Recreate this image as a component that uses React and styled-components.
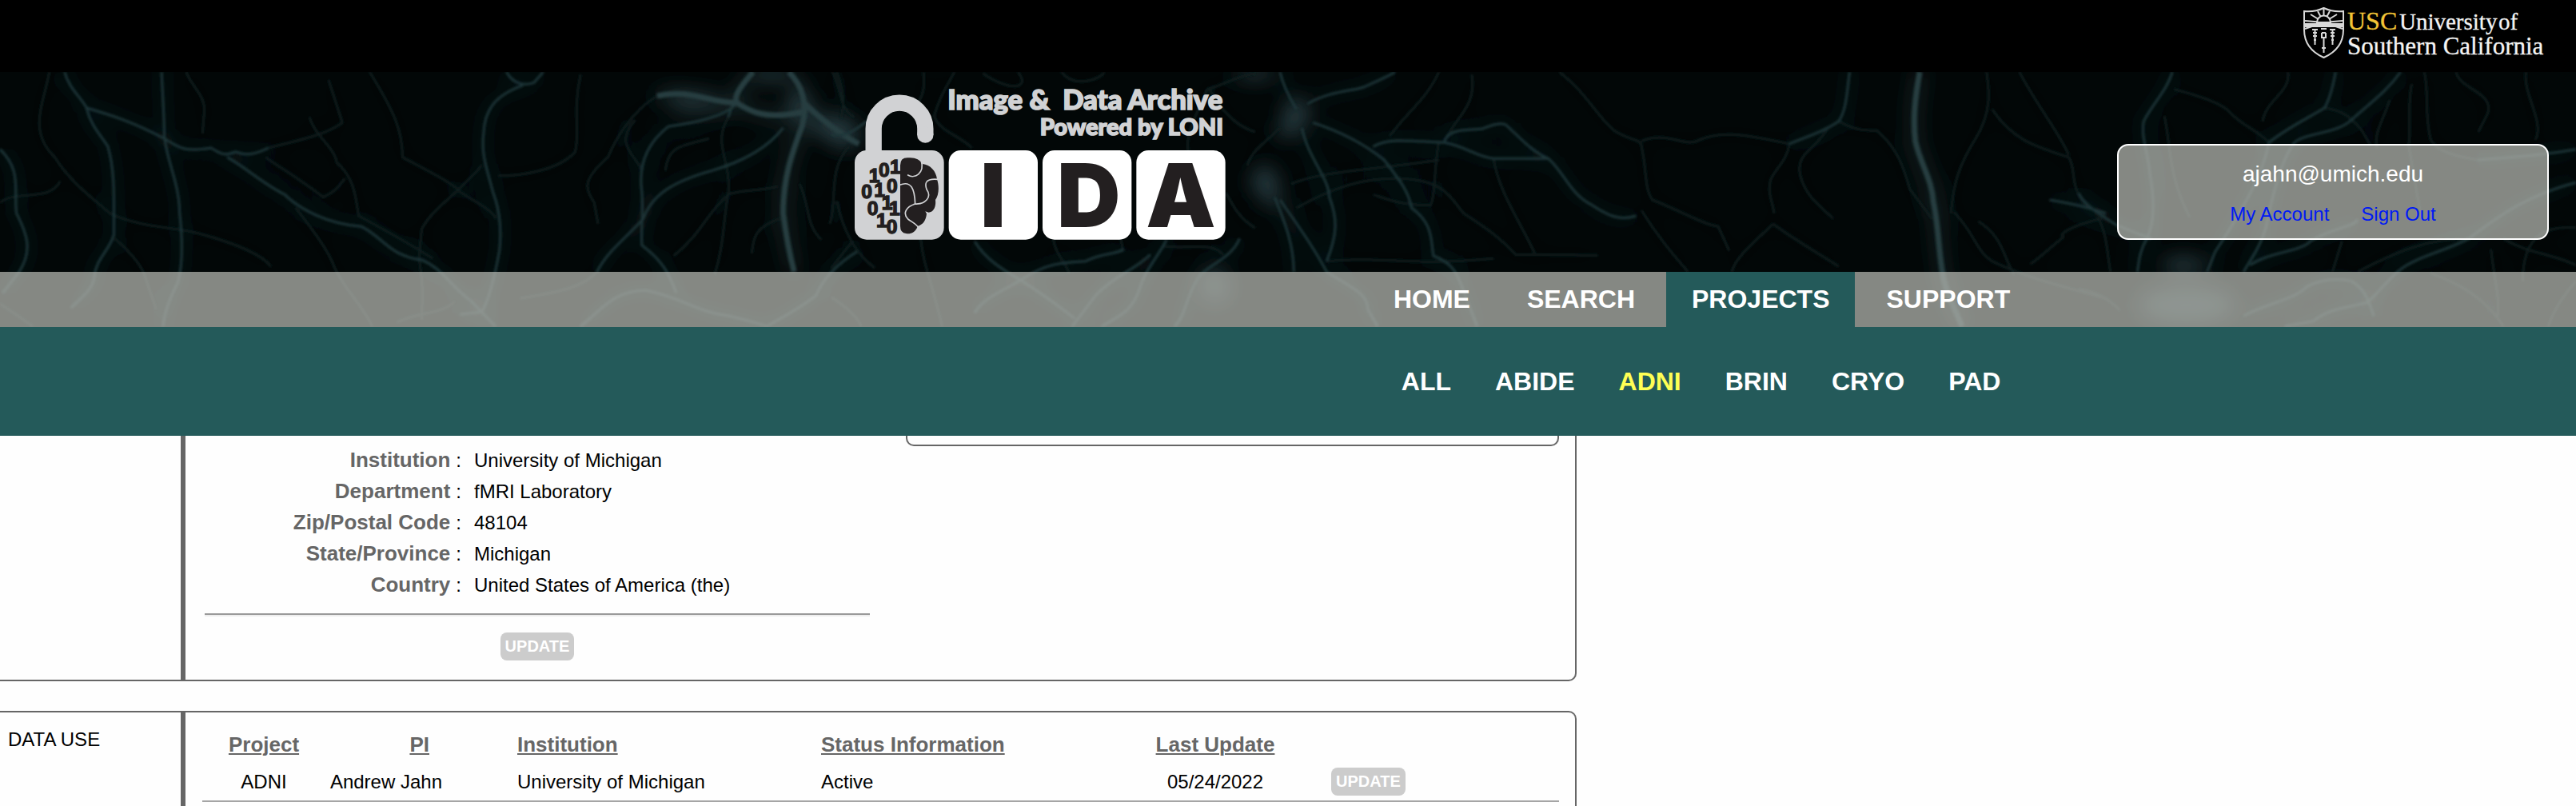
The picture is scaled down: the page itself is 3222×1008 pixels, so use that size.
import React from "react";
import styled, { createGlobalStyle } from "styled-components";

const sans = '"Liberation Sans", Arial, Helvetica, sans-serif';
const line = "#666";

const GlobalStyle = createGlobalStyle`
  *, *::before, *::after { box-sizing: border-box; }
  body {
    margin: 0;
    background: #fefefe;
    color: #000;
    font-family: ${sans};
    font-size: 24px;
    line-height: 39px;
  }
  a { color: inherit; text-decoration: none; }
`;

const Page = styled.div`
  min-height: 100vh;
  display: flex;
  flex-direction: column;
  overflow: hidden;
`;

const TopBar = styled.div`
  height: 90px;
  padding: 4px 40px 0 0;
  display: flex;
  justify-content: flex-end;
  background: #000;
`;

const Masthead = styled.header`
  position: relative;
  isolation: isolate;
  background: #020707;
`;

const Backdrop = styled.svg`
  position: absolute;
  inset: 0;
  width: 100%;
  height: 100%;
  z-index: -1;
`;

const Banner = styled.div`
  height: 250px;
  padding: 0 34px 40px 33.15%;
  display: flex;
  align-items: flex-end;
  justify-content: space-between;
`;

const LogoMark = styled.svg`
  width: 466px;
  height: 192px;
  overflow: visible;
`;

const AccountBox = styled.section`
  width: 540px;
  height: 120px;
  padding: 16px 0;
  border: 2px solid #fff;
  border-radius: 14px;
  background: rgba(178, 180, 174, 0.75);
  text-align: center;
`;

const Email = styled.div`
  color: #fff;
  font-size: 28px;
  line-height: 40px;
`;

const AccountLinks = styled.div`
  display: flex;
  justify-content: center;
  gap: 40px;
  padding-top: 10px;
  line-height: 40px;
  color: #0019f5;
`;

const MainNav = styled.nav`
  display: flex;
  gap: 7px;
  padding-left: 53.1%;
  background: rgba(178, 180, 174, 0.75);
`;

const NavLink = styled.a`
  padding: 0 32px;
  font-size: 32px;
  font-weight: bold;
  line-height: 68px;
  height: 69px;
  color: #fff;
  background: ${(p) => (p.$active ? "#245a5a" : "transparent")};
`;

const SubNav = styled.nav`
  display: flex;
  gap: 55px;
  height: 136px;
  padding-left: 54.4%;
  background: #245a5a;
`;

const SubLink = styled.a`
  font-size: 32px;
  font-weight: bold;
  line-height: 136px;
  color: ${(p) => (p.$active ? "#ffff54" : "#fff")};
`;

const Main = styled.main`
  flex: 1;
  display: flex;
  flex-direction: column;
  gap: 37px;
  max-width: 1972px;
`;

const Panel = styled.section`
  display: grid;
  grid-template-columns: 226px 1fr;
  flex-grow: ${(p) => (p.$grow ? 1 : 0)};
  border: 2px solid ${line};
  border-left: 0;
  border-top-width: ${(p) => (p.$continues ? 0 : 2)}px;
  border-bottom-width: ${(p) => (p.$grow ? 0 : 2)}px;
  border-radius: ${(p) => (p.$continues ? "0 0 10px 0" : "0 10px 0 0")};
`;

const PanelTitle = styled.h2`
  margin: 0;
  padding: 14px 10px;
  font-size: 24px;
  font-weight: normal;
`;

const PanelBody = styled.div`
  display: flex;
  align-items: flex-start;
  border-left: 6px solid ${line};
  padding: 0 20px 0 ${(p) => p.$indent}px;
`;

const Profile = styled.div`
  flex: 833 1 0;
  margin-right: 45px;
  padding: 11px 0 24px;
  text-align: center;
`;

const Fields = styled.dl`
  margin: 0;
`;

const Field = styled.div`
  display: flex;
  align-items: baseline;
  height: 39px;
`;

const FieldName = styled.dt`
  width: 321px;
  text-align: right;
  font-size: 26px;
  font-weight: bold;
  color: ${line};

  &::after {
    content: ":";
    margin-left: 7px;
    font-size: 24px;
    font-weight: normal;
    color: #000;
  }
`;

const FieldValue = styled.dd`
  margin: 0;
  padding-left: 16px;
`;

const Rule = styled.hr`
  margin: 16px 0 20px;
  border: 0;
  border-top: 2px solid #999;
  border-bottom: 2px solid #eee;
`;

const UpdateButton = styled.button`
  display: block;
  height: 35px;
  margin: ${(p) => (p.$centered ? "0 auto" : "0")};
  padding: 0 6px;
  border: 0;
  border-radius: 8px;
  background: #ccc;
  color: #fff;
  font: bold 20px ${sans};
`;

const SideBox = styled.div`
  flex: 814 1 0;
  height: 13px;
  border: 2px solid ${line};
  border-top: 0;
  border-radius: 0 0 10px 10px;
`;

const UseTable = styled.table`
  width: 100%;
  margin-top: 18px;
  table-layout: fixed;
  border-collapse: separate;
  border-spacing: 0;
`;

const Col = styled.col`
  width: ${(p) => p.$width};
`;

const Th = styled.th`
  height: 45px;
  padding: 0 ${(p) => p.$end || 0}px 0 0;
  text-align: ${(p) => p.$align || "left"};
  font-size: 26px;
  color: ${line};
  text-decoration: underline;
  text-decoration-thickness: 2px;
  text-underline-offset: 2px;
`;

const Td = styled.td`
  height: 49px;
  padding: 0 ${(p) => p.$end || 0}px 0 ${(p) => p.$start || 0}px;
  text-align: ${(p) => p.$align || "left"};
  border-bottom: 2px solid #a5a5a5;
`;

/* Each sheet is traced on its own grid, then mapped onto the banner. */
const neurons = [
  {
    map: "matrix(0.685 0 0 0.3333 0 -10)",
    somas: [[1408, 40, 36, 26], [1460, 160, 20, 70], [1270, 140, 50, 30], [1540, 270, 30, 40]],
    bright: [
      "M118,30C125,90 150,130 158,165C165,230 185,270 197,310C210,400 208,500 208,640C200,700 175,730 172,800C170,850 140,890 130,915",
      "M158,165C200,190 240,215 300,280C330,320 340,330 385,315C400,330 405,350 430,330C450,345 465,340 490,315",
      "M415,350C450,390 480,450 520,490C550,550 600,600 660,610C700,650 710,720 770,735C810,770 820,830 860,890L905,985",
      "M955,80C900,120 885,180 883,260C878,340 890,400 900,480C915,560 915,640 912,700C905,780 895,880 880,930L840,940",
      "M925,30C935,70 955,85 975,70L992,30",
      "M295,30C297,120 300,200 300,270C305,370 328,450 328,560C333,650 335,740 325,820C310,880 300,930 298,985",
      "M0,320C40,400 25,470 30,560C50,640 60,700 35,780L5,860",
      "M1375,30C1350,90 1340,130 1330,200",
      "M1430,240C1400,320 1350,370 1300,400C1230,440 1190,490 1175,580C1140,660 1110,700 1090,780",
      "M1345,150C1320,200 1270,220 1220,235C1180,300 1165,380 1172,480C1175,560 1170,620 1172,680C1210,740 1220,780 1235,860",
      "M1060,985C1100,920 1120,850 1180,850C1250,880 1270,930 1330,945C1370,965 1390,975 1400,985",
      "M1568,700C1520,760 1500,820 1490,870C1450,930 1420,960 1400,985",
    ],
    thick: [
      "M1440,30C1465,80 1475,150 1465,230C1445,340 1430,430 1430,560C1435,640 1440,700 1450,780",
      "M1470,150C1500,210 1540,270 1568,300",
      "M1200,120C1260,90 1300,150 1345,145C1370,180 1400,210 1465,180",
      "M1375,30C1350,90 1340,120 1345,145",
    ],
    dim: [
      "M1200,120C1150,180 1120,300 1110,350C1060,440 1070,470 1085,520L1092,600",
      "M1330,200C1300,300 1335,360 1330,480C1320,600 1322,680 1305,790",
      "M1295,280C1240,310 1220,310 1215,400",
      "M485,350C520,400 560,450 590,500C620,470 620,450 630,430",
      "M565,200C575,270 610,310 615,370C650,430 650,520 655,570C700,620 760,690 790,730",
      "M490,315C560,280 600,260 625,220L600,60",
      "M675,30C720,180 735,250 735,350C780,400 830,450 840,480C870,520 900,550 905,580",
      "M880,380C830,500 790,540 770,620L765,730C775,850 770,900 770,960",
      "M0,900C30,940 50,970 60,985",
      "M90,30C80,150 50,250 100,350C130,450 180,520 200,560C260,620 330,610 370,640C440,680 480,720 495,760",
      "M540,540C570,620 600,700 610,760C630,850 660,900 680,985",
      "M1060,40C1045,180 1060,260 1050,330C1020,400 950,420 910,420",
      "M340,30C350,90 380,120 372,200L370,260",
      "M725,970C760,930 810,940 830,890",
      "M1420,460C1380,480 1350,470 1330,490C1290,560 1280,640 1230,720",
      "M1425,580C1380,610 1375,650 1373,710",
      "M1520,30C1540,110 1530,160 1560,200",
      "M1460,450C1480,540 1470,600 1500,660",
      "M210,655C240,710 260,760 265,800L285,920",
      "M1160,210C1120,300 1160,340 1172,400",
      "M1550,310C1510,400 1530,520 1515,600",
      "M1090,780C1060,850 1000,860 950,880",
      "M0,520C30,470 90,520 110,440",
    ],
  },
  {
    map: "matrix(0.338 0 0 0.3333 1040 -5)",
    somas: [[0, 220, 80, 40], [1568, 20, 70, 24], [1420, 820, 50, 60]],
    bright: [
      "M0,250C60,260 90,230 130,200",
      "M1240,645C1200,720 1160,760 1140,830C1110,920 1060,930 1000,970",
      "M1510,640C1480,720 1380,740 1350,800C1310,870 1310,930 1270,970",
      "M890,970L980,850C1060,770 1120,760 1180,700",
      "M530,920C560,860 650,830 710,790C800,730 860,730 940,725C1010,690 1060,700 1080,680",
      "M530,650C570,720 640,760 705,800C800,860 860,910 900,940",
    ],
    thick: [],
    dim: [
      "M20,15C45,90 50,130 35,190",
      "M455,15C420,80 400,110 380,180C400,240 470,250 520,300",
      "M340,15C350,90 330,120 300,160",
      "M0,750C40,700 60,670 80,650",
      "M20,500C50,650 120,720 160,750",
      "M330,640C340,740 370,800 410,970",
      "M1230,670C1330,680 1400,650 1450,700",
      "M1568,600C1500,560 1480,500 1460,470",
      "M690,15C740,80 660,90 560,20",
      "M1390,80C1340,200 1310,250 1320,310",
      "M1390,80C1460,60 1500,30 1568,20",
      "M1400,80C1440,160 1500,220 1568,240",
      "M820,640C830,700 860,720 880,770",
      "M0,860C60,900 100,940 110,970",
      "M1070,640L1080,690",
      "M850,15C900,80 1000,40 1010,15",
    ],
  },
  {
    map: "matrix(0.685 0 0 0.3333 1560 -10)",
    somas: [[90, 185, 22, 55], [75, 240, 18, 36], [32, 440, 24, 54], [45, 500, 14, 36]],
    bright: [
      "M110,150C150,100 200,100 215,85C240,60 260,45 270,30",
      "M120,220C180,260 220,310 250,360C280,440 295,480 300,540C340,600 335,660 340,720C380,750 385,800 395,850L420,985",
      "M230,310C260,275 300,290 360,295C400,310 420,350 450,355L550,355",
      "M360,290C370,240 400,250 430,243C450,225 465,220 472,228C500,280 520,330 550,355C580,410 590,490 630,530C660,570 680,590 710,570",
      "M60,30C65,80 75,120 90,170",
      "M100,240C110,350 150,430 150,500C165,580 165,640 145,740",
      "M50,500C70,600 85,680 85,780",
      "M60,510C90,600 120,680 145,780C190,840 220,860 220,920L238,985",
      "M1100,30C1095,100 1095,170 1080,215C1050,260 1010,280 990,300",
      "M1465,510C1510,525 1540,540 1568,560",
    ],
    thick: [
      "M1228,30C1220,120 1215,200 1220,290C1230,380 1250,430 1253,520C1262,600 1262,700 1270,790C1275,860 1295,930 1305,985",
    ],
    dim: [
      "M90,540C160,460 210,430 270,430C360,430 370,500 395,560C440,620 460,650 490,715L640,718",
      "M350,30C330,120 300,170 280,220L260,270",
      "M350,290C340,400 345,480 335,530C280,530 260,510 230,490",
      "M570,30C620,110 640,200 670,250C700,290 720,280 720,310C730,400 725,470 740,510C790,550 830,600 860,610L880,700",
      "M990,300C985,370 960,400 955,440C950,490 960,520 962,560",
      "M1080,215C1110,250 1130,250 1150,250C1190,320 1200,400 1210,470L1250,580",
      "M1350,30C1355,100 1360,180 1330,280C1300,380 1290,440 1285,560",
      "M1360,170C1400,290 1440,310 1500,350C1515,400 1500,450 1530,530L1568,570",
      "M1410,30C1440,150 1480,250 1500,340",
      "M1290,555C1330,640 1330,700 1360,740C1420,800 1480,830 1568,880",
      "M1335,590C1380,650 1380,720 1400,790",
      "M1560,580C1500,610 1480,640 1490,650C1460,700 1440,740 1430,750",
      "M720,290C760,250 800,310 820,290C860,250 900,260 990,300",
      "M720,550C750,650 780,720 805,780",
      "M960,600C1000,660 1050,720 1080,760",
      "M960,600C920,680 890,730 885,780",
      "M1060,240C1040,320 1000,330 1010,420C1020,500 1050,540 1070,580",
      "M410,40C420,160 380,200 360,290",
      "M450,360C460,480 500,600 525,710",
      "M145,740C240,720 300,760 450,730",
      "M60,240C30,300 10,320 0,380",
      "M80,450C140,400 220,400 350,360",
    ],
  },
  {
    map: "matrix(0.3967 0 0 0.3333 2600 -5)",
    somas: [[340, 890, 150, 70], [330, 740, 70, 30]],
    bright: [
      "M295,15C280,80 230,140 205,200C195,260 220,320 225,400C240,500 240,580 215,640C190,690 190,730 185,765",
      "M810,15C800,80 790,120 775,150C720,190 650,230 600,280C590,340 570,400 545,460C510,540 470,620 430,690L405,765",
      "M1015,15C970,90 920,130 860,195C810,250 720,240 680,280C640,340 610,480 590,600C570,680 540,720 520,765",
      "M1568,305C1450,330 1300,340 1260,345",
      "M0,470C20,520 80,560 120,590C160,610 200,630 230,640",
      "M1568,430C1400,480 1300,580 1230,640C1150,690 1060,710 1010,760C970,800 940,850 910,880C850,900 790,900 740,950L650,970",
      "M520,930C600,880 680,870 720,820C770,790 820,790 860,800C900,830 910,860 930,930",
      "M540,740C600,690 700,690 730,650C800,600 860,600 880,570",
    ],
    thick: [],
    dim: [
      "M1260,345C1180,330 1130,310 1110,270C1090,180 1105,100 1090,15",
      "M775,150C830,160 850,180 860,195C890,220 900,250 920,290",
      "M1050,60C1035,140 1050,230 1040,290L1080,560",
      "M1230,640C1100,640 1000,690 880,765",
      "M300,80C400,110 460,140 480,170C520,220 560,230 600,280",
      "M660,15C670,90 590,120 580,200",
      "M1110,770C1200,810 1280,860 1340,970",
      "M1568,800C1530,850 1500,900 1480,970",
      "M0,830C60,840 100,870 130,910",
      "M830,650L800,765",
      "M1340,640C1400,690 1500,700 1568,740",
      "M980,120C960,200 930,240 940,300",
      "M60,560C90,620 90,700 100,765",
      "M270,180C290,280 280,400 350,560",
      "M1190,15C1200,80 1310,90 1290,170L1260,240",
      "M1300,680C1310,800 1330,860 1320,940",
      "M1568,600C1480,590 1400,620 1400,800",
      "M1410,15C1400,100 1470,200 1440,270",
    ],
  },
];

function NeuronBackdrop() {
  return (
    <Backdrop viewBox="0 0 3222 319" preserveAspectRatio="none" aria-hidden="true">
      <defs>
        <filter id="soft" x="0" y="0" width="3222" height="319" filterUnits="userSpaceOnUse">
          <feGaussianBlur stdDeviation="1.7" />
        </filter>
        <filter id="glow" x="0" y="0" width="3222" height="319" filterUnits="userSpaceOnUse">
          <feGaussianBlur stdDeviation="12" />
        </filter>
        <g id="fibres">
          {neurons.map((sheet) => (
            <g key={sheet.map} transform={sheet.map} fill="none" strokeLinejoin="round">
              {sheet.dim.map((d) => (
                <path key={d} d={d} stroke="#0e1c1e" strokeWidth="3" vectorEffect="non-scaling-stroke" />
              ))}
              {sheet.bright.map((d) => (
                <path key={d} d={d} stroke="#1f3639" strokeWidth="3" vectorEffect="non-scaling-stroke" />
              ))}
              {sheet.thick.map((d) => (
                <path key={d} d={d} stroke="#263d41" strokeWidth="7" vectorEffect="non-scaling-stroke" />
              ))}
            </g>
          ))}
        </g>
        <g id="somas" fill="#253b3f">
          {neurons.map((sheet) => (
            <g key={sheet.map} transform={sheet.map}>
              {sheet.somas.map(([cx, cy, rx, ry]) => (
                <ellipse key={cx + "-" + cy} cx={cx} cy={cy} rx={rx} ry={ry} />
              ))}
            </g>
          ))}
        </g>
      </defs>
      <g filter="url(#glow)">
        <use href="#fibres" />
        <use href="#somas" />
      </g>
      <g filter="url(#soft)">
        <use href="#fibres" />
      </g>
    </Backdrop>
  );
}

function UscLogo() {
  const rays = [[2, 17], [2, 27], [9, 9], [18, 5], [33, 5], [42, 9], [49, 17], [49, 27], [25.5, 2]];
  return (
    <svg width="302" height="76" viewBox="0 0 302 76" role="img" aria-label="USC University of Southern California">
      <g transform="translate(1 5)" fill="none" stroke="#d8d8d8" strokeWidth="2">
        <path d="M1 5C10 6 19 4 25.500 1C32 4 41 6 50 5V28C50 46 39 57 25.500 63C12 57 1 46 1 28Z" />
        {rays.map(([x, y]) => (
          <path key={x + "-" + y} d={`M25.500 19L${x} ${y}`} />
        ))}
        <path d="M1 20H50V25H1Z" fill="#d8d8d8" stroke="none" />
        <path d="M17 19a8.500 8.500 0 0 1 17 0z" fill="#000" />
        <path d="M11 28h7M12 32h5M12 36h5M14.500 27V47M13 41h3M33 28h7M34 32h5M34 36h5M36.500 27V47M35 41h3" />
        <path d="M22 27h7M23 32h5M23 32v6h5v-6M25.500 38V57M23 51h5" />
      </g>
      <g fontFamily='"Liberation Serif", serif' fill="#f4f4f4" stroke="#f4f4f4" strokeWidth="0.300">
        <text x="56" y="33" fontSize="32" fill="#f2c537" stroke="#f2c537">USC</text>
        <text x="121" y="33" fontSize="29">University</text>
        <text x="245" y="33" fontSize="29">of</text>
        <text x="56" y="64" fontSize="31">Southern California</text>
      </g>
    </svg>
  );
}

/* Left half of the brain: binary digits, each with its own place. */
const digits = [
  ["1", 140, 415], ["0", 177, 394], ["1", 219, 382],
  ["0", 112, 474], ["1", 160, 469], ["0", 207, 453],
  ["0", 134, 537], ["1", 188, 515], ["1", 216, 537],
  ["1", 168, 582], ["0", 206, 607],
];

function IdaLogo() {
  return (
    <LogoMark viewBox="84 54 1398 576" role="img" aria-label="Image and Data Archive">
      <path d="M158 310V213A97 97 0 0 1 352 213V236" fill="none" stroke="#d1d2d4" strokeWidth="61" />
      <circle cx="352" cy="236" r="30.500" fill="#d1d2d4" />
      <rect x="87" y="294" width="335" height="335" rx="45" fill="#d1d2d4" />
      <g fill="#fff">
        <rect x="440" y="294" width="334" height="335" rx="45" />
        <rect x="792" y="294" width="334" height="335" rx="45" />
        <rect x="1144" y="294" width="334" height="335" rx="45" />
      </g>
      <g fontFamily="Inter, sans-serif" fontWeight="900" fill="#231f20" fontSize="330" textAnchor="middle">
        <text x="606" y="582">I</text>
        <text x="965" y="582">D</text>
        <text x="1311" y="582">A</text>
      </g>
      <g fontFamily="Lato, sans-serif" fontWeight="900" fill="#d1d2d4" stroke="#d1d2d4" strokeWidth="5" textAnchor="end">
        <text x="1468" y="142" fontSize="104">Image &amp; {"\u00a0"}Data Archive</text>
        <text x="1470" y="238" fontSize="87">Powered by LONI</text>
      </g>
      <text
        x={digits.map((d) => d[1]).join(" ")}
        y={digits.map((d) => d[2]).join(" ")}
        fontFamily='"Liberation Sans", sans-serif'
        fontWeight="bold"
        fontSize="74"
        fill="#231f20"
        stroke="#231f20"
        strokeWidth="4"
      >
        {digits.map((d) => d[0]).join("")}
      </text>
      <path
        d="M258 350Q258 322 285 322C312 319 332 328 341 345C372 348 392 372 396 402C405 430 403 462 390 480C393 508 382 526 365 527L352 523L357 532C355 558 342 574 324 578C314 604 295 609 280 606Q258 604 258 578Z"
        fill="#231f20"
      />
      <g fill="none" stroke="#d1d2d4" strokeWidth="5" strokeLinecap="round">
        <path d="M337 334C350 380 312 402 287 387" />
        <path d="M256 424C300 406 312 440 314 495" />
        <path d="M400 403C350 398 350 420 357 440C378 470 352 497 314 495C280 506 266 530 287 552C305 565 318 570 326 584" />
      </g>
    </LogoMark>
  );
}

const profile = [
  ["Institution", "University of Michigan"],
  ["Department", "fMRI Laboratory"],
  ["Zip/Postal Code", "48104"],
  ["State/Province", "Michigan"],
  ["Country", "United States of America (the)"],
];

export default function App() {
  return (
    <Page>
      <GlobalStyle />
      <TopBar>
        <UscLogo />
      </TopBar>
      <Masthead>
        <NeuronBackdrop />
        <Banner>
          <IdaLogo />
          <AccountBox>
            <Email>ajahn@umich.edu</Email>
            <AccountLinks>
              <a href="#account">My Account</a>
              <a href="#signout">Sign Out</a>
            </AccountLinks>
          </AccountBox>
        </Banner>
        <MainNav aria-label="Main">
          {["HOME", "SEARCH", "PROJECTS", "SUPPORT"].map((name) => (
            <NavLink key={name} href={"#" + name.toLowerCase()} $active={name === "PROJECTS"}>
              {name}
            </NavLink>
          ))}
        </MainNav>
      </Masthead>
      <SubNav aria-label="Projects">
        {["ALL", "ABIDE", "ADNI", "BRIN", "CRYO", "PAD"].map((name) => (
          <SubLink key={name} href={"#" + name.toLowerCase()} $active={name === "ADNI"}>
            {name}
          </SubLink>
        ))}
      </SubNav>
      <Main>
        <Panel $continues>
          <div />
          <PanelBody $indent={24}>
            <Profile>
              <Fields>
                {profile.map(([name, value]) => (
                  <Field key={name}>
                    <FieldName>{name}</FieldName>
                    <FieldValue>{value}</FieldValue>
                  </Field>
                ))}
              </Fields>
              <Rule />
              <UpdateButton type="button" $centered>UPDATE</UpdateButton>
            </Profile>
            <SideBox />
          </PanelBody>
        </Panel>
        <Panel $grow>
          <PanelTitle>DATA USE</PanelTitle>
          <PanelBody $indent={21}>
            <UseTable>
              <colgroup>
                <Col $width="154px" />
                <Col $width="240px" />
                <Col $width="380px" />
                <Col $width="400px" />
                <Col $width="186px" />
                <Col $width="auto" />
              </colgroup>
              <thead>
                <tr>
                  <Th $align="center">Project</Th>
                  <Th $align="right" $end={110}>PI</Th>
                  <Th>Institution</Th>
                  <Th>Status Information</Th>
                  <Th $align="center">Last Update</Th>
                  <Th aria-label="Action" />
                </tr>
              </thead>
              <tbody>
                <tr>
                  <Td $align="center">ADNI</Td>
                  <Td $align="right" $end={94}>Andrew Jahn</Td>
                  <Td>University of Michigan</Td>
                  <Td>Active</Td>
                  <Td $align="center">05/24/2022</Td>
                  <Td $start={52}>
                    <UpdateButton type="button">UPDATE</UpdateButton>
                  </Td>
                </tr>
              </tbody>
            </UseTable>
          </PanelBody>
        </Panel>
      </Main>
    </Page>
  );
}
